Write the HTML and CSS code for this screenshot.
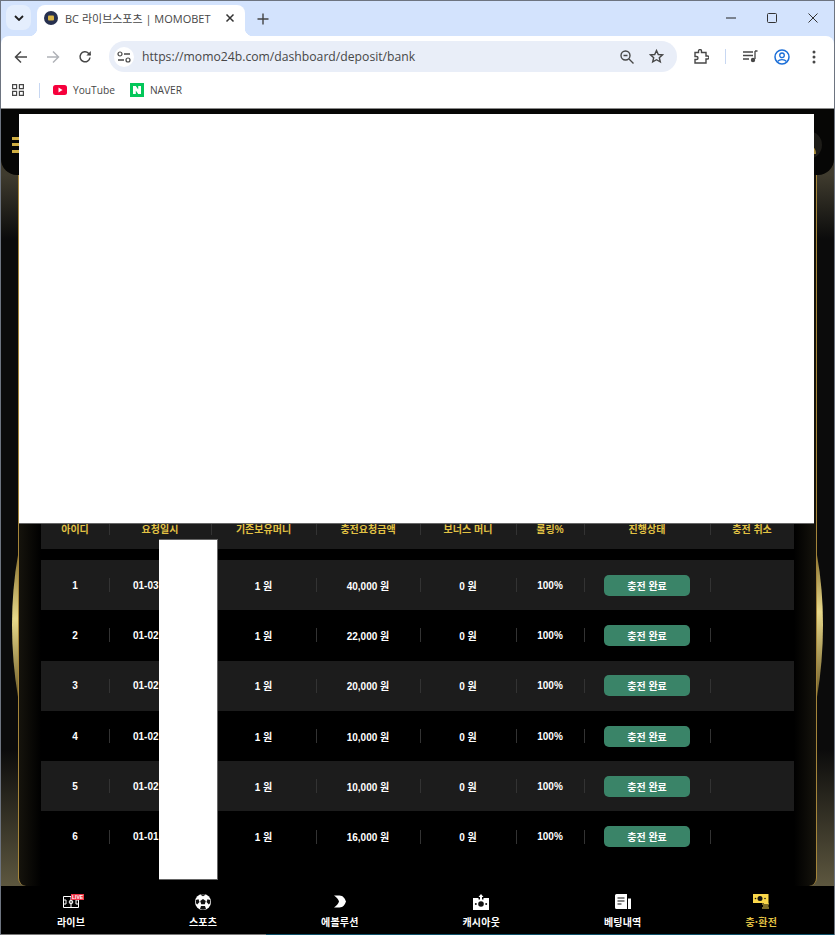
FILE: index.html
```html
<!DOCTYPE html>
<html lang="ko">
  <head>
    <meta charset="UTF-8" />
    <title>BC 라이브스포츠 | MOMOBET</title>
    <link rel="stylesheet" href="styles.css">
  </head>
  <body>
    <div class="window">
      <div class="tab-strip">
        <button class="tab-search">
          <svg width="10" height="6" viewBox="0 0 10 6"><path d="M1 1l4 4 4-4" fill="none" stroke="#1f1f1f" stroke-width="1.8"/></svg>
        </button>
        <div class="tab">
          <svg class="favicon" width="14" height="14" viewBox="0 0 14 14"><circle cx="7" cy="7" r="7" fill="#27304f"/><rect x="4" y="4.5" width="6" height="5" rx="1" fill="#d9b445"/></svg>
          <span class="tab-title">BC 라이브스포츠 | MOMOBET</span>
          <svg width="10" height="10" viewBox="0 0 10 10"><path d="M1.5 1.5l7 7M8.5 1.5l-7 7" stroke="#333" stroke-width="1.5"/></svg>
        </div>
        <svg class="new-tab" width="12" height="12" viewBox="0 0 12 12"><path d="M6 .5v11M.5 6h11" stroke="#444" stroke-width="1.4"/></svg>
        <div class="window-controls">
          <svg width="12" height="12" viewBox="0 0 12 12"><path d="M1 6h10" stroke="#222" stroke-width="1"/></svg>
          <svg width="12" height="12" viewBox="0 0 12 12"><rect x="1.5" y="1.5" width="9" height="9" rx="1" fill="none" stroke="#333" stroke-width="1"/></svg>
          <svg width="12" height="12" viewBox="0 0 12 12"><path d="M1.5 1.5l9 9M10.5 1.5l-9 9" stroke="#333" stroke-width="1"/></svg>
        </div>
      </div>

      <div class="toolbar">
        <div class="nav-btn">
          <svg width="14" height="14" viewBox="0 0 14 14"><path d="M13 7H2M7 1.5L1.5 7 7 12.5" fill="none" stroke="#474747" stroke-width="1.5"/></svg>
        </div>
        <div class="nav-btn">
          <svg width="14" height="14" viewBox="0 0 14 14"><path d="M1 7h11M7 1.5L12.5 7 7 12.5" fill="none" stroke="#b0b3b8" stroke-width="1.5"/></svg>
        </div>
        <div class="nav-btn">
          <svg width="14" height="14" viewBox="0 0 14 14"><path d="M12 7.5A5 5 0 1 1 10.5 3.2L12.5 5" fill="none" stroke="#474747" stroke-width="1.5"/><path d="M12.8 1v4.4H8.4z" fill="#474747"/></svg>
        </div>
        <div class="omnibox">
          <div class="site-info">
            <svg width="14" height="12" viewBox="0 0 14 12"><circle cx="3" cy="3" r="2" fill="none" stroke="#474747" stroke-width="1.2"/><path d="M7 3h6M1 9h6" stroke="#474747" stroke-width="1.3"/><circle cx="11" cy="9" r="2" fill="none" stroke="#474747" stroke-width="1.2"/></svg>
          </div>
          <span class="url">https://momo24b.com/dashboard/deposit/bank</span>
          <svg class="omni-zoom" width="14" height="14" viewBox="0 0 14 14"><circle cx="5.5" cy="5.5" r="4.5" fill="none" stroke="#474747" stroke-width="1.4"/><path d="M3.5 5.5h4M9 9l4.5 4.5" stroke="#474747" stroke-width="1.4"/></svg>
          <svg class="omni-star" width="15" height="15" viewBox="0 0 15 15"><path d="M7.5 1.5l1.8 4 4.2.4-3.2 2.8 1 4.2-3.8-2.2-3.8 2.2 1-4.2L1.5 5.900l4.200-.4z" fill="none" stroke="#474747" stroke-width="1.4"/></svg>
        </div>
        <div class="tool-icons">
          <svg width="15" height="15" viewBox="0 0 15 15"><path d="M1 3.500h3.500V2a1.500 1.500 0 0 1 3 0v1.500H12v3.500h1.500a1.500 1.500 0 0 1 0 3H12v4H1v-3.500h1.500a1.500 1.500 0 0 0 0-3H1z" fill="none" stroke="#474747" stroke-width="1.400"/></svg>
          <span class="tool-divider"></span>
          <svg width="15" height="13" viewBox="0 0 15 13"><path d="M0 2h10M0 5.500h10M0 9h6" stroke="#474747" stroke-width="1.300"/><path d="M12 1h2.500M12 1v8" stroke="#474747" stroke-width="1.300"/><circle cx="10" cy="10" r="2.200" fill="#474747"/></svg>
          <svg width="16" height="16" viewBox="0 0 16 16"><circle cx="8" cy="8" r="7" fill="none" stroke="#1a6ed8" stroke-width="1.500"/><circle cx="8" cy="6.300" r="2.300" fill="none" stroke="#1a6ed8" stroke-width="1.300"/><path d="M3.500 12.500c2-2.600 7-2.600 9 0" fill="none" stroke="#1a6ed8" stroke-width="1.300"/></svg>
          <svg width="4" height="14" viewBox="0 0 4 14"><circle cx="2" cy="2" r="1.500" fill="#474747"/><circle cx="2" cy="7" r="1.500" fill="#474747"/><circle cx="2" cy="12" r="1.500" fill="#474747"/></svg>
        </div>
      </div>

      <div class="bookmarks">
        <svg width="12" height="12" viewBox="0 0 12 12"><path d="M.6.6h4v4h-4zM7.400.6h4v4h-4zM.6 7.400h4v4h-4zM7.400 7.400h4v4h-4z" fill="none" stroke="#474747" stroke-width="1.200"/></svg>
        <span class="bookmark-divider"></span>
        <div class="bookmark bookmark-yt">
          <svg width="14" height="10" viewBox="0 0 14 10"><rect width="14" height="10" rx="2.500" fill="#f6003c"/><path d="M5.500 2.600L9.600 5 5.500 7.400z" fill="#fff"/></svg>
          <span>YouTube</span>
        </div>
        <div class="bookmark bookmark-naver">
          <span class="naver-logo"><svg width="8" height="8" viewBox="0 0 8 8"><path d="M0 0h2.800l2.400 3.600V0H8v8H5.200L2.800 4.400V8H0z" fill="#fff"/></svg></span>
          <span>NAVER</span>
        </div>
      </div>

      <div class="page">
        <div class="top-bar">
          <div class="hamburger"><span></span><span></span><span></span></div>
          <div class="avatar">
            <svg width="16" height="18" viewBox="0 0 16 18"><circle cx="8" cy="5" r="4.500" fill="#a88c3c"/><path d="M0 18c0-6 3-8 8-8s8 2 8 8z" fill="#a88c3c"/></svg>
          </div>
        </div>

        <div class="panel">
          <div class="deposit-table">
            <div class="deposit-row deposit-head">
              <div class="cell">아이디</div>
              <div class="cell">요청일시</div>
              <div class="cell">기존보유머니</div>
              <div class="cell">충전요청금액</div>
              <div class="cell">보너스 머니</div>
              <div class="cell">롤링%</div>
              <div class="cell">진행상태</div>
              <div class="cell">충전 취소</div>
            </div>
            <div class="deposit-row">
              <div class="cell">1</div>
              <div class="cell cell-date">01-03</div>
              <div class="cell">1 원</div>
              <div class="cell">40,000 원</div>
              <div class="cell">0 원</div>
              <div class="cell">100%</div>
              <div class="cell"><span class="status">충전 완료</span></div>
              <div class="cell"></div>
            </div>
            <div class="deposit-row">
              <div class="cell">2</div>
              <div class="cell cell-date">01-02</div>
              <div class="cell">1 원</div>
              <div class="cell">22,000 원</div>
              <div class="cell">0 원</div>
              <div class="cell">100%</div>
              <div class="cell"><span class="status">충전 완료</span></div>
              <div class="cell"></div>
            </div>
            <div class="deposit-row">
              <div class="cell">3</div>
              <div class="cell cell-date">01-02</div>
              <div class="cell">1 원</div>
              <div class="cell">20,000 원</div>
              <div class="cell">0 원</div>
              <div class="cell">100%</div>
              <div class="cell"><span class="status">충전 완료</span></div>
              <div class="cell"></div>
            </div>
            <div class="deposit-row">
              <div class="cell">4</div>
              <div class="cell cell-date">01-02</div>
              <div class="cell">1 원</div>
              <div class="cell">10,000 원</div>
              <div class="cell">0 원</div>
              <div class="cell">100%</div>
              <div class="cell"><span class="status">충전 완료</span></div>
              <div class="cell"></div>
            </div>
            <div class="deposit-row">
              <div class="cell">5</div>
              <div class="cell cell-date">01-02</div>
              <div class="cell">1 원</div>
              <div class="cell">10,000 원</div>
              <div class="cell">0 원</div>
              <div class="cell">100%</div>
              <div class="cell"><span class="status">충전 완료</span></div>
              <div class="cell"></div>
            </div>
            <div class="deposit-row">
              <div class="cell">6</div>
              <div class="cell cell-date">01-01</div>
              <div class="cell">1 원</div>
              <div class="cell">16,000 원</div>
              <div class="cell">0 원</div>
              <div class="cell">100%</div>
              <div class="cell"><span class="status">충전 완료</span></div>
              <div class="cell"></div>
            </div>
          </div>
        </div>

        <svg class="crescent crescent-left" width="7" height="142" viewBox="0 0 7 142"><defs><linearGradient id="goldL" x1="0" y1="0" x2="0" y2="1"><stop offset="0" stop-color="#8a7433"/><stop offset=".45" stop-color="#e8d98a"/><stop offset="1" stop-color="#6e5c28"/></linearGradient></defs><path d="M7 0C-1 45-1 95 7 142z" fill="url(#goldL)"/></svg>
        <svg class="crescent crescent-right" width="7" height="142" viewBox="0 0 7 142"><defs><linearGradient id="goldR" x1="0" y1="0" x2="0" y2="1"><stop offset="0" stop-color="#8a7433"/><stop offset=".4" stop-color="#e8d98a"/><stop offset="1" stop-color="#6e5c28"/></linearGradient></defs><path d="M0 0C8 45 8 95 0 142z" fill="url(#goldR)"/></svg>

        <div class="mask mask-top"></div>
        <div class="mask mask-dates"></div>
      </div>

      <div class="bottom-nav">
        <div class="nav-item">
          <span class="nav-icon live-icon">
            <svg width="16" height="14" viewBox="0 0 16 14"><path d="M.5 1.500h15v11H.5zM8 1.500v11M.5 5h2.500v4H.5M15.500 5H13v4h2.500" fill="none" stroke="#fff" stroke-width="1"/><circle cx="8" cy="7" r="1.800" fill="none" stroke="#fff" stroke-width="1"/></svg>
            <span class="live-badge">LIVE</span>
          </span>
          <span>라이브</span>
        </div>
        <div class="nav-item">
          <span class="nav-icon">
            <svg width="16" height="16" viewBox="0 0 16 16"><circle cx="8" cy="8" r="8" fill="#fff"/><path d="M8 5l2.800 2-1 3.200H6.200l-1-3.200zM5.500 .8L8 2.200 10.500 .8 10 .3H6zM.8 6l2.700-.8 1 2.800-2.300 2.500-1.400-1.500zM15.200 6l-2.700-.8-1 2.800 2.300 2.500 1.400-1.500zM5 15l1-3h4l1 3-3 .8z" fill="#111"/></svg>
          </span>
          <span>스포츠</span>
        </div>
        <div class="nav-item">
          <span class="nav-icon">
            <svg width="12" height="13" viewBox="0 0 12 13"><path d="M0 .5h5.500C9 .5 11 3.500 12 6.500 11 9.500 9 12.500 5.500 12.500H0C2.800 10.500 4.500 8.500 5 6.500 4.500 4.500 2.800 2.500 0 .5z" fill="#fff"/></svg>
          </span>
          <span>에볼루션</span>
        </div>
        <div class="nav-item">
          <span class="nav-icon">
            <svg width="16" height="16" viewBox="0 0 16 16"><path d="M0 4h5.500v1.500h5V4H16v12H0z" fill="#fff"/><path d="M8 0l2.500 3H9v3.500H7V3H5.500z" fill="#fff"/><circle cx="8" cy="10" r="2.800" fill="#111"/><circle cx="2.800" cy="10" r="1" fill="#111"/><circle cx="13.200" cy="10" r="1" fill="#111"/></svg>
          </span>
          <span>캐시아웃</span>
        </div>
        <div class="nav-item">
          <span class="nav-icon">
            <svg width="16" height="15" viewBox="0 0 16 15"><path d="M1.500 0H12v15H1.500A1.500 1.500 0 0 1 0 13.500v-12A1.500 1.500 0 0 1 1.500 0z" fill="#fff"/><path d="M13 4.500h3V15h-3z" fill="#fff"/><path d="M2.500 4h7M2.500 7h7M2.500 10h4" stroke="#111" stroke-width="1.200"/></svg>
          </span>
          <span>베팅내역</span>
        </div>
        <div class="nav-item nav-item-active">
          <span class="nav-icon">
            <svg width="16" height="15" viewBox="0 0 16 15"><path d="M0 0h15.500v10H11v-1H0z" fill="#fbd84a"/><circle cx="7" cy="4.500" r="2.500" fill="#111"/><circle cx="2.500" cy="4.500" r=".8" fill="#111"/><circle cx="12" cy="4.500" r=".8" fill="#111"/><path d="M9 10h7M10 12h5.500M9 14h7" stroke="#fbd84a" stroke-width="1.200"/></svg>
          </span>
          <span>충·환전</span>
        </div>
      </div>
      <div class="bottom-strip"></div>
    </div>
  </body>
</html>
```

FILE: styles.css
```css
* {
  box-sizing: border-box;
}
html,
body {
  margin: 0;
  height: 100%;
}
body {
  overflow: hidden;
  font-family: "Liberation Sans", "Noto Sans CJK KR", sans-serif;
}
.window {
  height: 935px;
  display: flex;
  flex-direction: column;
  border-top: 1px solid #6d7480;
  border-left: 1px solid #6d7480;
  border-right: 1px solid #6d7480;
  background-color: #d3e3fd;
}

/* browser tab strip */
.tab-strip {
  height: 35px;
  display: flex;
  align-items: flex-start;
  padding-top: 4px;
  padding-left: 5px;
}
.tab-search {
  width: 25px;
  height: 25px;
  border: none;
  border-radius: 8px;
  background-color: #e4eefd;
  display: flex;
  align-items: center;
  justify-content: center;
  padding: 0;
}
.tab {
  position: relative;
  width: 208px;
  height: 31px;
  margin-left: 6px;
  padding: 0 10px 6px 7px;
  background-color: white;
  border-radius: 8px 8px 0 0;
  display: flex;
  align-items: center;
}
.tab:before,
.tab:after {
  content: "";
  position: absolute;
  bottom: 0;
  width: 8px;
  height: 8px;
}
.tab:before {
  left: -8px;
  background: radial-gradient(circle at 0 0, transparent 8px, white 8.5px);
}
.tab:after {
  right: -8px;
  background: radial-gradient(circle at 100% 0, transparent 8px, white 8.5px);
}
.favicon {
  flex-shrink: 0;
}
.tab-title {
  flex: 1;
  margin-left: 7px;
  font-family: "Open Sans", "Noto Sans CJK KR", sans-serif;
  font-size: 11px;
  color: #474747;
  white-space: nowrap;
}
.new-tab {
  margin-left: 12px;
  margin-top: 8px;
}
.window-controls {
  margin-left: auto;
  width: 109px;
  height: 26px;
  padding-right: 15px;
  display: flex;
  align-items: center;
  justify-content: space-between;
}

/* address bar */
.toolbar {
  height: 36px;
  background-color: white;
  border-radius: 8px 8px 0 0;
  display: flex;
  align-items: center;
  padding-left: 4px;
  padding-top: 5px;
}
.nav-btn {
  width: 32px;
  height: 32px;
  display: flex;
  align-items: center;
  justify-content: center;
}
.omnibox {
  width: 568px;
  height: 31px;
  margin-left: 8px;
  background-color: #e9eef8;
  border-radius: 16px;
  display: flex;
  align-items: center;
  padding-left: 5px;
}
.site-info {
  width: 20px;
  height: 20px;
  background-color: white;
  border-radius: 50%;
  display: flex;
  align-items: center;
  justify-content: center;
}
.url {
  margin-left: 8px;
  font-family: "Open Sans", sans-serif;
  font-size: 12.2px;
  color: #474747;
  white-space: nowrap;
}
.omni-zoom {
  margin-left: auto;
}
.omni-star {
  margin-left: 15px;
  margin-right: 13px;
}
.tool-icons {
  flex: 1;
  display: flex;
  align-items: center;
  padding-left: 17px;
}
.tool-divider {
  width: 1px;
  height: 15px;
  margin: 0 17px 0 16px;
  background-color: #c7d7f2;
}
.tool-icons svg:nth-of-type(3) {
  margin-left: 16px;
}
.tool-icons svg:nth-of-type(4) {
  margin-left: 22px;
}

/* bookmarks */
.bookmarks {
  height: 37px;
  background-color: white;
  border-bottom: 1px solid #8a8a8a;
  display: flex;
  align-items: center;
  padding-left: 11px;
}
.bookmark-divider {
  width: 1px;
  height: 15px;
  margin: 0 13px 0 15px;
  background-color: #c7d7f2;
}
.bookmark {
  display: flex;
  align-items: center;
  gap: 6px;
  font-family: "Open Sans", sans-serif;
  font-size: 10.2px;
  color: #474747;
}
.bookmark-naver {
  margin-left: 15px;
}
.naver-logo {
  width: 14px;
  height: 14px;
  background-color: #03c75a;
  display: flex;
  align-items: center;
  justify-content: center;
}

/* page */
.page {
  position: relative;
  flex: 1;
  display: flex;
  flex-direction: column;
  background: linear-gradient(180deg, #3f3b2e 66px, #0b0b0b 130px, #0b0b0b 640px, #5d573f 777px);
}
.top-bar {
  height: 66px;
  flex-shrink: 0;
  padding: 5px 12px 0 11px;
  background-color: #060605;
  border-radius: 0 0 16px 16px;
  display: flex;
  align-items: center;
  justify-content: space-between;
}
.hamburger {
  width: 20px;
  display: flex;
  flex-direction: column;
  gap: 3.5px;
}
.hamburger span {
  height: 3px;
  background-color: #cfae42;
}
.avatar {
  width: 28px;
  height: 28px;
  background-color: #1d1c18;
  border-radius: 50%;
  display: flex;
  align-items: center;
  justify-content: center;
}
.panel {
  flex: 1;
  margin: 0 17px;
  padding: 332px 22px 0;
  background: linear-gradient(90deg, #15130c, #000 22px, #000 775px, #15130c);
  border-left: 1px solid #a5853a;
  border-right: 1px solid #a5853a;
  border-radius: 0 0 8px 8px;
}
.deposit-row {
  display: grid;
  grid-template-columns: 68px 102px 105px 104px 96px 68px 126px 84px;
  height: 50.3px;
  color: white;
  font-size: 10px;
  font-weight: bold;
}
.deposit-row:nth-child(even) {
  background-color: #1c1c1c;
}
.deposit-head {
  height: 42px;
  margin-bottom: 11px;
  background-color: #1c1c1c;
  color: #e2c244;
  align-items: center;
}
.cell {
  height: 100%;
  display: flex;
  align-items: center;
  justify-content: center;
  background: linear-gradient(#333, #333) left center / 1px 14px no-repeat;
}
.cell:first-child {
  background: none;
}
.cell-date {
  justify-content: flex-start;
  padding-left: 24px;
}
.status {
  width: 86px;
  height: 21px;
  background-color: #3a8468;
  border-radius: 5px;
  display: flex;
  align-items: center;
  justify-content: center;
}

/* gold arcs beside the panel */
.crescent {
  position: absolute;
  top: 446px;
}
.crescent-left {
  left: 10px;
}
.crescent-right {
  right: 10px;
}

/* blanked out parts of the screenshot */
.mask {
  position: absolute;
  background-color: white;
}
.mask-top {
  left: 18px;
  top: 5px;
  width: 795px;
  height: 410px;
  border-bottom: 1px solid #666;
}
.mask-dates {
  left: 158px;
  top: 430px;
  width: 59px;
  height: 341px;
  border-top: 1px solid #666;
  border-right: 1px solid #666;
  border-bottom: 1px solid #666;
}

/* bottom menu */
.bottom-nav {
  height: 48px;
  flex-shrink: 0;
  background-color: black;
  display: flex;
  justify-content: space-around;
  padding: 0 5px 0 4px;
}
.nav-item {
  display: flex;
  flex-direction: column;
  align-items: center;
  color: white;
  font-family: "Noto Sans CJK KR", sans-serif;
  font-size: 10px;
  font-weight: bold;
  line-height: 14px;
  letter-spacing: 0.2px;
  white-space: nowrap;
}
.nav-icon {
  position: relative;
  height: 28px;
  display: flex;
  align-items: center;
  padding-top: 3px;
  margin-bottom: 1px;
}
.nav-item-active {
  color: #e2c244;
}
.live-badge {
  position: absolute;
  top: 8px;
  left: 8px;
  padding: 0 1px;
  background-color: #ef3346;
  color: white;
  font-family: "Liberation Sans", sans-serif;
  font-size: 5px;
  line-height: 6px;
  letter-spacing: 0;
}
.bottom-strip {
  height: 1px;
  flex-shrink: 0;
  background: linear-gradient(90deg, #777 265px, #0f5068 265px);
}
```
